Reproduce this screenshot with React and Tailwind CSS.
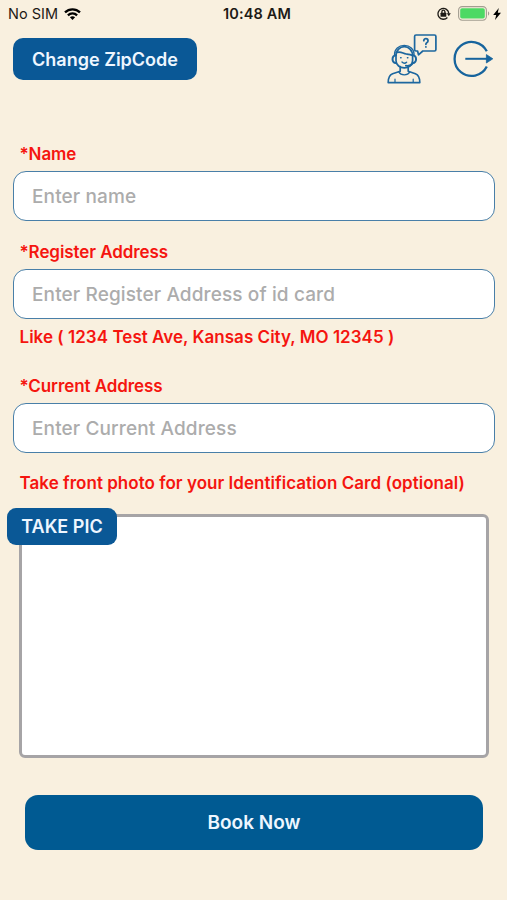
function StatusBar() {
  return (
    <div className="grid grid-cols-3 items-center h-7 pl-2 pr-[6px] text-[14.5px] leading-none text-[#1d1a16]">
      <div className="flex items-center gap-[6px]">
        <span>No SIM</span>
        <svg className="w-[17px] h-3 -mt-px" viewBox="0 0 17 12" fill="none" stroke="#000" strokeWidth="2.3">
          <path d="M1 4.4C5.2.3 11.8.3 16 4.4" />
          <path d="M3.9 7.3c2.6-2.5 6.6-2.5 9.2 0" />
          <path d="M8.5 12 5.9 9.3c1.5-1.3 3.7-1.3 5.2 0z" fill="#000" stroke="none" />
        </svg>
      </div>
      <span className="text-center font-semibold whitespace-nowrap pl-[5px] tracking-[0.15px]">10:48 AM</span>
      <div className="flex items-center justify-end">
        <svg className="w-[14px] h-[13px] mr-[7px] -mt-[2px]" viewBox="0 0 14 13" fill="none" stroke="#1d1a16" strokeWidth="1.3">
          <path d="M10.4 10.5A5.4 5.4 0 1 1 11.8 6.5" />
          <path d="M9.8 6.2h4l-2 3z" fill="#1d1a16" stroke="none" />
          <rect x="3.5" y="5.7" width="5.8" height="4" rx=".5" fill="#1d1a16" stroke="none" />
          <path d="M4.9 6V4.7a1.5 1.5 0 0 1 3 0V6" />
        </svg>
        <svg className="w-8 h-[15px] mr-[3px] -mt-px" viewBox="0 0 32 15">
          <rect x=".6" y=".6" width="27.8" height="13.6" rx="3.6" fill="none" stroke="#a39d91" strokeWidth="1.1" />
          <rect x="2.2" y="2.3" width="24.6" height="10.2" rx="1.8" fill="#4cd964" />
          <path d="M30 5.2c1.7.8 1.7 3.7 0 4.5z" fill="#a39d91" />
        </svg>
        <svg className="w-2 h-3 -mt-px" viewBox="0 0 8 12">
          <path d="M5.8 0 .2 6.9h3L2 12 8 4.8H4.8z" fill="#000" />
        </svg>
      </div>
    </div>
  );
}

function SupportIcon() {
  return (
    <svg className="w-[50px] h-[50px]" viewBox="0 0 50 50" fill="none" stroke="#1d679f" strokeWidth="1.7" strokeLinejoin="round" strokeLinecap="round">
      {/* Speech bubble */}
      <path d="M29 1h18.5a1.4 1.4 0 0 1 1.4 1.4v13.2a1.4 1.4 0 0 1-1.4 1.4H35.8l-4.3 3.8-.9-3.8H29a1.4 1.4 0 0 1-1.4-1.4V2.4A1.4 1.4 0 0 1 29 1z" />
      <path d="M36.8 6.7c0-2.7 4.2-2.7 4.2 0 0 2-2.1 1.9-2.1 3.6M38.9 12.8v.1" strokeWidth="1.8" />
      {/* Head and headset */}
      <path d="M9 22c0-12.4 16.6-12.4 16.6 0v4.5c0 9.8-16.6 9.8-16.6 0z" />
      <path d="M7.6 21.5C6.4 8 28.2 8 27 21.5" strokeWidth="1.4" />
      <path d="M9.2 18.6c5.2-1.6 6.4 1 10 1.4 2.4.2 4 .2 6.4 1.6" />
      <path d="M9 21.3c-4.6-.2-4.6 8 0 7.8M25.6 21.3c4.6-.2 4.6 8 0 7.8" strokeWidth="2" />
      <path d="M25.8 29.3c-1.4 2.3-3.8 2.8-7 2.4" />
      <path d="M13.6 23.8h.5M20.4 23.8h.5M15 28c1.6 1.6 3.2 1.5 4.6.2" strokeWidth="1.4" />
      {/* Shoulders */}
      <path d="M13.2 32.6v4.6L5.6 39.8C2.4 41 1.2 43.6 1.2 48.6h31.6c0-5-1.2-7.6-4.4-8.8l-7.2-2.6v-4.6" />
      <path d="M11.9 38c2 3.8 8.8 3.8 10.8 0" strokeWidth="1.4" />
      <path d="M8 45.2v3M26.2 45.2v3" strokeWidth="1.2" />
    </svg>
  );
}

function LogoutIcon() {
  return (
    <svg className="w-[41px] h-[38px]" viewBox="0 0 41 38" fill="none" stroke="#17649d" strokeWidth="2.3">
      <path d="M33.8 11.3A17 17 0 1 0 33.8 26.5" />
      <path d="M12.3 18.8H34" strokeWidth="2" />
      <path d="M33.4 14.6 39.8 18.8 33.4 23z" fill="#17649d" strokeWidth=".8" strokeLinejoin="round" />
    </svg>
  );
}

function Field({ label, placeholder, hint }) {
  return (
    <div>
      <label className="block pl-[6.5px] text-[17px] leading-5 font-semibold tracking-[-0.08px] text-[#f5150f]">{label}</label>
      <input
        placeholder={placeholder}
        className="block w-full h-[50px] mt-[7px] pl-[18px] rounded-[13px] border-[1.5px] border-[#497fa8] bg-white text-[19px] font-medium tracking-[0.12px] placeholder:text-[#acacac] placeholder:opacity-100 outline-none"
      />
      {hint && <p className="pl-[6.5px] mt-2 text-[17px] leading-5 font-semibold tracking-[0.03px] text-[#f5150f] whitespace-nowrap">{hint}</p>}
    </div>
  );
}

export default function App() {
  return (
    <div className="w-full h-[900px] overflow-hidden bg-[#f9f0df] font-['Inter',sans-serif]">
      <StatusBar />

      {/* Header */}
      <header className="flex items-start justify-between pl-[13px] pr-[13px] pt-[5px]">
        <button className="mt-[5px] w-[184px] h-[42px] rounded-[10px] bg-[#0a5896] text-[18px] font-semibold text-[#eef6ff]">
          Change ZipCode
        </button>
        <div className="flex items-start gap-4 pt-px -mb-px">
          <SupportIcon />
          <div className="pt-[6px]">
            <LogoutIcon />
          </div>
        </div>
      </header>

      <main className="pl-[13px] pr-3 pt-[61px]">
        <div className="flex flex-col">
          <Field label="*Name" placeholder="Enter name" />
          <div className="h-[21px]" />
          <Field label="*Register Address" placeholder="Enter Register Address of id card" hint="Like ( 1234 Test Ave, Kansas City, MO 12345 )" />
          <div className="h-[29px]" />
          <Field label="*Current Address" placeholder="Enter Current Address" />
        </div>

        <p className="mt-5 pl-[6.5px] text-[17px] leading-5 font-semibold tracking-[0.03px] text-[#f5150f] whitespace-nowrap">
          Take front photo for your Identification Card (optional)
        </p>

        {/* ID card photo */}
        <div className="relative mt-[21px] mx-[6px] h-[244px] rounded-[6px] border-[3px] border-[#a6a4a6] bg-white">
          <button className="absolute -left-[15px] -top-[9px] w-[110px] h-[37px] rounded-[9px] bg-[#0a5896] text-[18px] font-semibold text-[#eef6ff]">
            TAKE PIC
          </button>
        </div>

        <button className="block mt-[37px] mx-3 w-[458px] h-[55px] pt-[2px] rounded-[13px] bg-[#005a92] text-[19px] font-semibold text-[#eef6ff]">
          Book Now
        </button>
      </main>
    </div>
  );
}
